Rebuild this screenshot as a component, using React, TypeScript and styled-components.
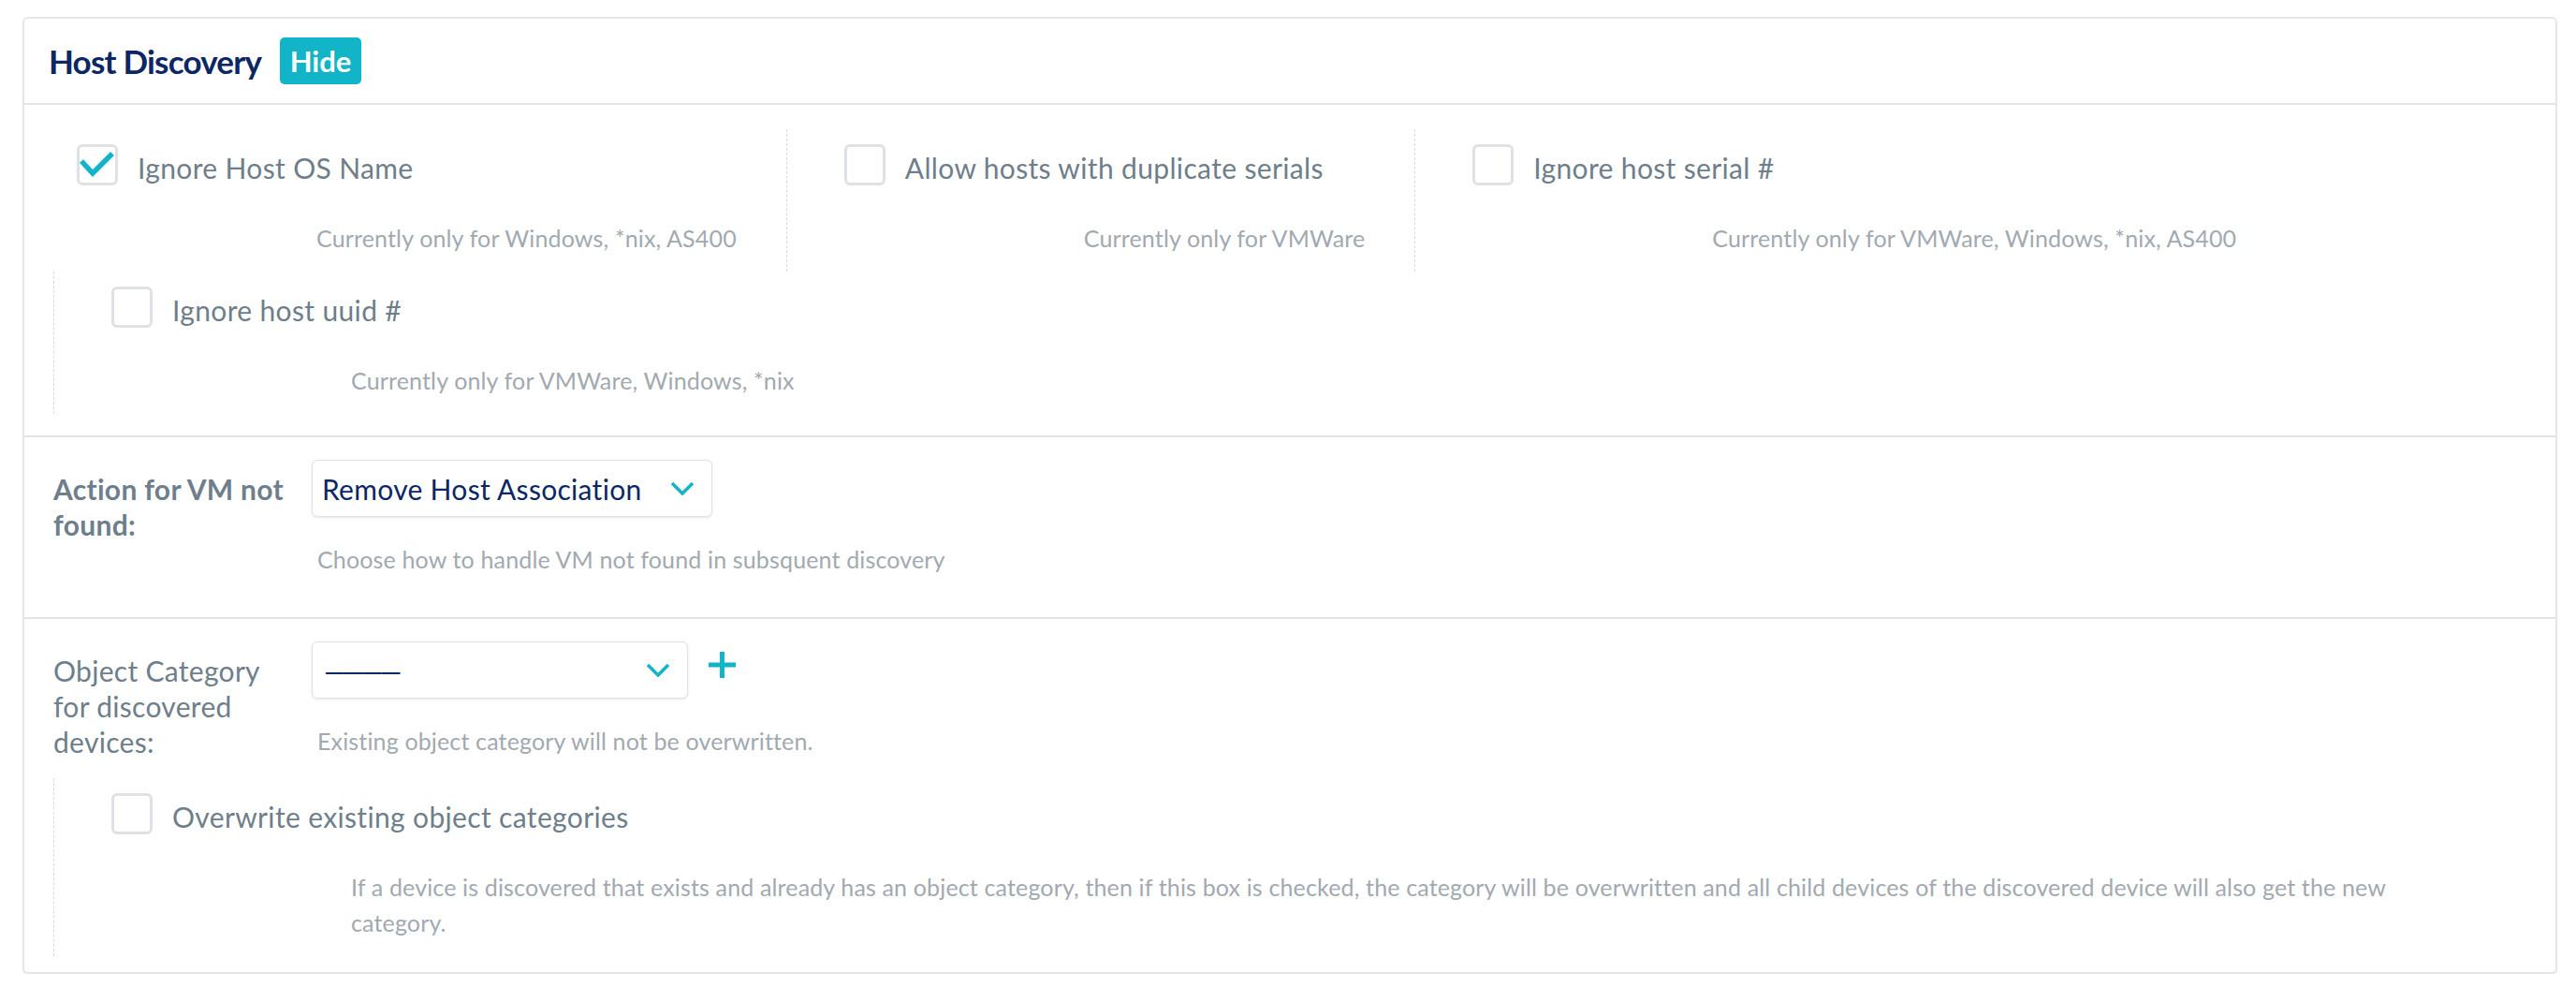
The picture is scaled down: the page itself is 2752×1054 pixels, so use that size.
import React from "react";
import styled, { createGlobalStyle } from "styled-components";

const colors = {
  navy: "#0c2764",
  teal: "#12b4c7",
  label: "#6e7e8b",
  hint: "#a2a9b1",
  line: "#e1e4e8",
  dash: "#d6dade",
};

const GlobalStyle = createGlobalStyle`
  body {
    margin: 0;
    background: #ffffff;
    font-family: Lato, "Noto Sans", sans-serif;
  }
`;

type CheckOption = {
  label: string;
  hint: string;
  checked?: boolean;
};

const hostOptions: CheckOption[] = [
  { label: "Ignore Host OS Name", hint: "Currently only for Windows, *nix, AS400", checked: true },
  { label: "Allow hosts with duplicate serials", hint: "Currently only for VMWare" },
  { label: "Ignore host serial #", hint: "Currently only for VMWare, Windows, *nix, AS400" },
  { label: "Ignore host uuid #", hint: "Currently only for VMWare, Windows, *nix" },
];

const Checkbox: React.FC<{ checked?: boolean }> = ({ checked }) => (
  <Box>
    {checked && (
      <svg width="44" height="44" viewBox="0 0 44 44">
        <polyline
          points="5,18 17,31 38,10"
          fill="none"
          stroke={colors.teal}
          strokeWidth="5.5"
          strokeLinejoin="miter"
        />
      </svg>
    )}
  </Box>
);

const Chevron = () => (
  <svg width="26" height="15" viewBox="0 0 26 15">
    <polyline points="2,2 13,13 24,2" fill="none" stroke={colors.teal} strokeWidth="3.5" />
  </svg>
);

const Plus = () => (
  <svg width="29" height="28" viewBox="0 0 29 28">
    <path d="M14.5 0 V28 M0 14 H29" stroke={colors.teal} strokeWidth="5" />
  </svg>
);

const OptionItem: React.FC<CheckOption & { wide?: boolean }> = ({ label, hint, checked, wide }) => (
  <Item $wide={wide}>
    <ItemHead>
      <Checkbox checked={checked} />
      <ItemLabel>{label}</ItemLabel>
    </ItemHead>
    <ItemHint>{hint}</ItemHint>
  </Item>
);

const App: React.FC = () => (
  <Page>
    <GlobalStyle />
    <Card>
      <Header>
        <Title>Host Discovery</Title>
        <Badge>Hide</Badge>
      </Header>

      <Options>
        {hostOptions.map((o) => (
          <OptionItem key={o.label} {...o} />
        ))}
      </Options>

      <Section>
        <Field>
          <FieldLabel $bold>Action for VM not found:</FieldLabel>
          <FieldBody>
            <Controls>
              <Select $width={428}>
                <SelectValue>Remove Host Association</SelectValue>
                <Chevron />
              </Select>
            </Controls>
            <FieldHint>Choose how to handle VM not found in subsquent discovery</FieldHint>
          </FieldBody>
        </Field>
      </Section>

      <Section $last>
        <Field>
          <FieldLabel>Object Category for discovered devices:</FieldLabel>
          <FieldBody>
            <Controls>
              <Select $width={402}>
                <SelectValue $empty>————</SelectValue>
                <Chevron />
              </Select>
              <AddButton>
                <Plus />
              </AddButton>
            </Controls>
            <FieldHint>Existing object category will not be overwritten.</FieldHint>
          </FieldBody>
        </Field>
        <SubOption>
          <OptionItem
            wide
            label="Overwrite existing object categories"
            hint="If a device is discovered that exists and already has an object category, then if this box is checked, the category will be overwritten and all child devices of the discovered device will also get the new category."
          />
        </SubOption>
      </Section>
    </Card>
  </Page>
);

const Page = styled.div`
  padding: 18px 20px 0 24px;
`;

const Card = styled.div`
  border: 2px solid #e4e6e9;
  border-radius: 6px;
  box-shadow: 0 2px 2px rgba(0, 0, 0, 0.06);
  background: #fff;
`;

const Header = styled.div`
  display: flex;
  align-items: center;
  gap: 20px;
  height: 90px;
  padding-left: 26px;
  border-bottom: 2px solid ${colors.line};
`;

const Title = styled.div`
  font-family: Lato, sans-serif;
  font-weight: 700;
  font-size: 35px;
  letter-spacing: -0.8px;
  color: ${colors.navy};
`;

const Badge = styled.div`
  display: flex;
  align-items: center;
  justify-content: center;
  width: 87px;
  height: 50px;
  border-radius: 5px;
  background: ${colors.teal};
  color: #fff;
  font-weight: 700;
  font-size: 31px;
`;

const Options = styled.div`
  display: flex;
  flex-wrap: wrap;
  padding: 26px 0 23px 31px;
`;

const Item = styled.div<{ $wide?: boolean }>`
  display: flex;
  flex-direction: column;
  box-sizing: border-box;
  padding: 16px 53px 17px 61px;
  border-left: 1px dashed ${colors.dash};
  ${({ $wide }) => ($wide ? "width: 100%;" : "")}

  ${Options} > &:first-child {
    border-left: none;
    padding-left: 25px;
  }
`;

const ItemHead = styled.div`
  display: flex;
  align-items: flex-start;
  gap: 21px;
`;

const Box = styled.div`
  flex: none;
  width: 44px;
  height: 44px;
  box-sizing: border-box;
  border: 3px solid #dee2e6;
  border-radius: 6px;
  background: #fff;
  position: relative;

  svg {
    position: absolute;
    left: -3px;
    top: -3px;
  }
`;

const ItemLabel = styled.div`
  padding-top: 3px;
  font-size: 30px;
  letter-spacing: 0.35px;
  line-height: 44px;
  color: ${colors.label};
  white-space: nowrap;
`;

const ItemHint = styled.div`
  margin-top: 34px;
  padding-left: 256px;
  font-size: 25px;
  letter-spacing: 0.15px;
  line-height: 38px;
  color: ${colors.hint};
`;

const Section = styled.div<{ $last?: boolean }>`
  border-top: 2px solid ${colors.line};
  padding: 24px 24px ${({ $last }) => ($last ? "17px" : "43px")} 31px;
`;

const Field = styled.div`
  display: flex;
  align-items: flex-start;
`;

const FieldLabel = styled.div<{ $bold?: boolean }>`
  width: 276px;
  flex: none;
  box-sizing: border-box;
  padding: 12px 20px 0 0;
  font-size: 30px;
  letter-spacing: 0.3px;
  line-height: 38px;
  font-weight: ${({ $bold }) => ($bold ? 700 : 400)};
  color: ${colors.label};
`;

const FieldBody = styled.div`
  display: flex;
  flex-direction: column;
`;

const Controls = styled.div`
  display: flex;
  align-items: flex-start;
  gap: 22px;
`;

const Select = styled.div<{ $width: number }>`
  display: flex;
  align-items: center;
  justify-content: space-between;
  box-sizing: border-box;
  width: ${({ $width }) => $width}px;
  height: 61px;
  padding: 0 18px 0 10px;
  border: 1px solid #dfe2e6;
  border-radius: 6px;
  box-shadow: 0 1px 3px rgba(0, 0, 0, 0.1);
  background: #fff;
`;

const SelectValue = styled.span<{ $empty?: boolean }>`
  font-size: 30px;
  letter-spacing: ${({ $empty }) => ($empty ? "-4px" : "0.3px")};
  padding-left: ${({ $empty }) => ($empty ? "2px" : "0")};
  color: ${colors.navy};
`;

const AddButton = styled.div`
  margin-top: 11px;
  display: flex;
`;

const FieldHint = styled.div`
  margin-top: 26px;
  padding-left: 6px;
  font-size: 25px;
  letter-spacing: 0.15px;
  line-height: 38px;
  color: ${colors.hint};
`;

const SubOption = styled.div`
  margin-top: 20px;
  display: flex;
`;

export default App;
